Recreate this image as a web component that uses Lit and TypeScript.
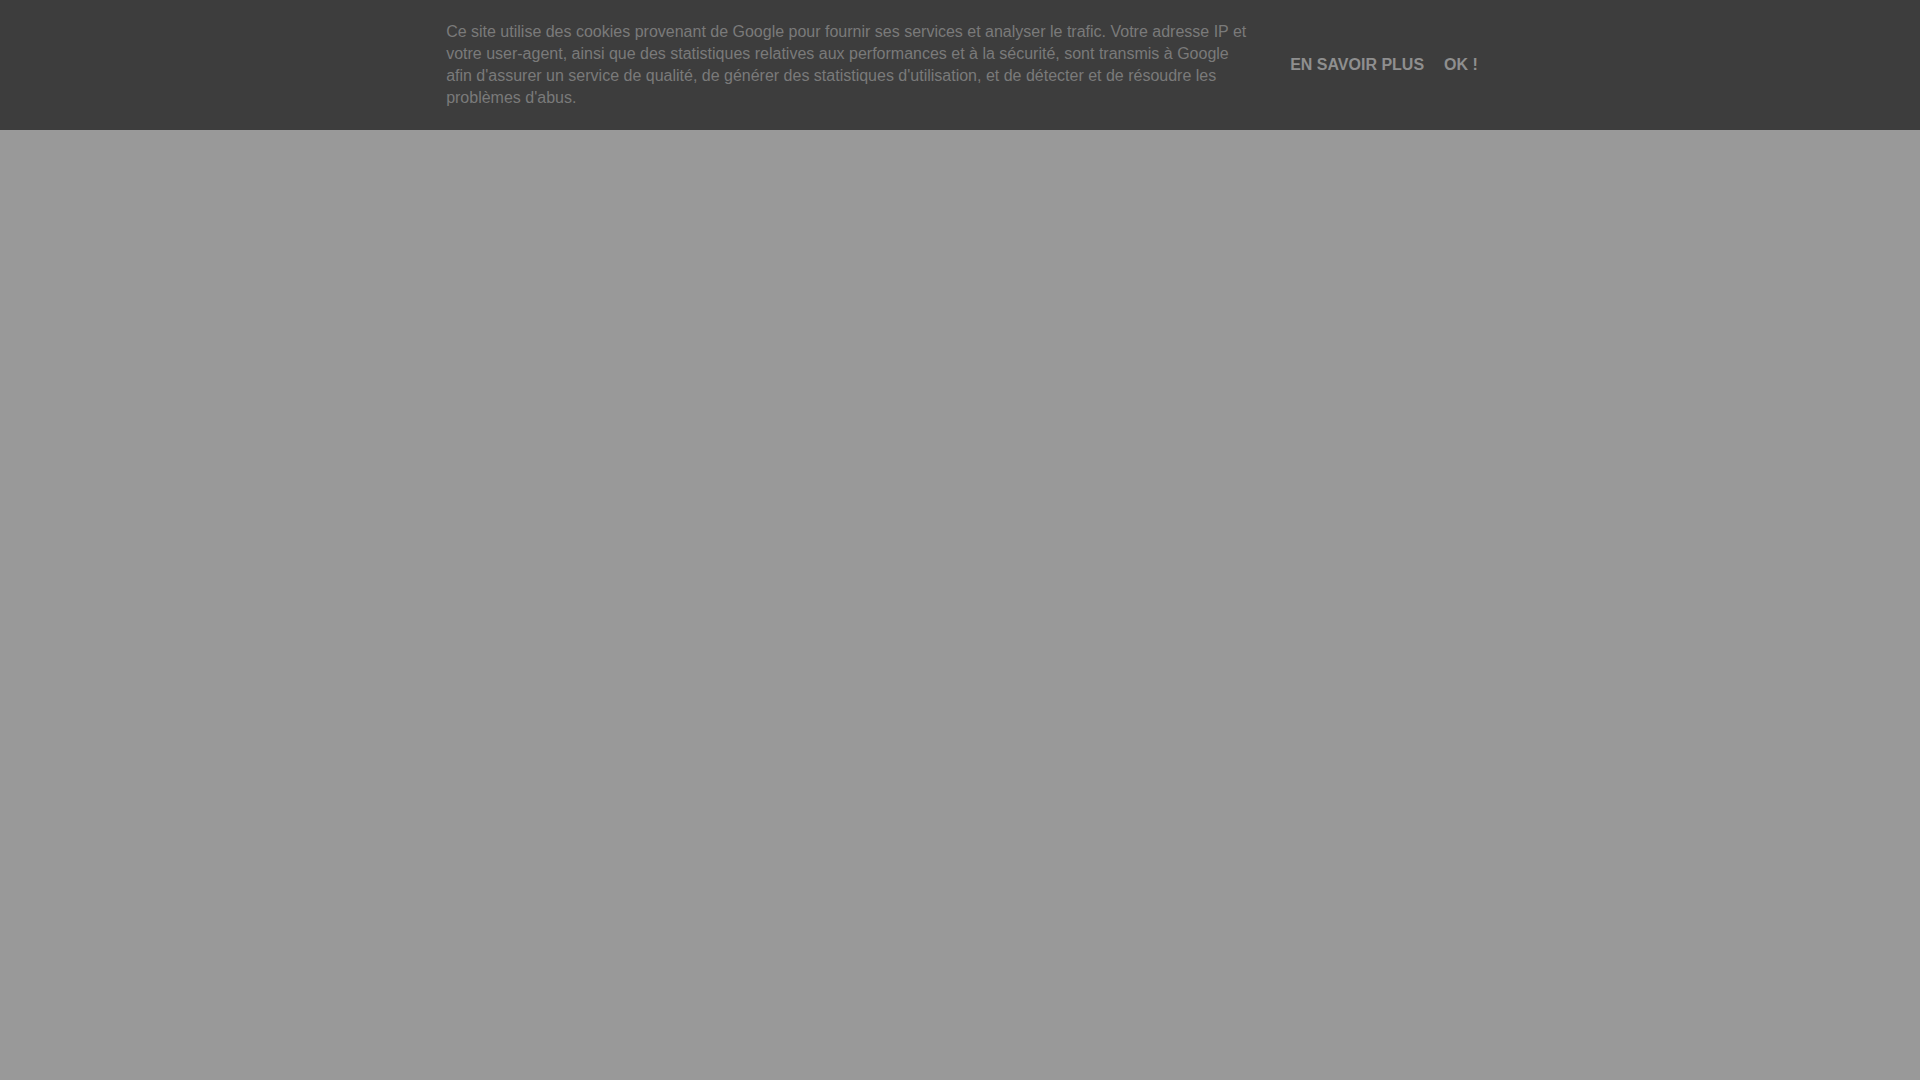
import { LitElement, html, css } from 'lit';
import { customElement } from 'lit/decorators.js';

@customElement('cookie-notice')
export class CookieNotice extends LitElement {
    static styles = css`
        :host {
            display: block;
            background: #3d3d3d;
            font: 16px/22px "Liberation Sans", Arial, sans-serif;
        }
        .inner {
            display: flex;
            align-items: center;
            justify-content: center;
            gap: 40px;
            padding: 21px 16px 21px 20px;
        }
        .text {
            flex: 0 1 804px;
            margin: 0;
            color: #7a7a7a;
        }
        .buttons {
            display: flex;
            gap: 20px;
            white-space: nowrap;
        }
        .button {
            padding: 0;
            border: 0;
            background: none;
            color: #8f8f8f;
            font: inherit;
            font-weight: bold;
            text-decoration: none;
            text-transform: uppercase;
            cursor: pointer;
        }
    `;

    render() {
        return html`
            <div class="inner">
                <p class="text">
                    Ce site utilise des cookies provenant de Google pour fournir ses services et analyser le trafic. Votre adresse IP et votre user-agent, ainsi que des statistiques relatives aux performances et à la sécurité, sont transmis à Google afin d'assurer un service de qualité, de générer des statistiques d'utilisation, et de détecter et de résoudre les problèmes d'abus.
                </p>
                <div class="buttons">
                    <a class="button" href="#cookies">En savoir plus</a>
                    <button class="button" type="button" @click=${this._dismiss}>OK !</button>
                </div>
            </div>
        `;
    }

    _dismiss() {
        this.dispatchEvent(new CustomEvent('dismiss', { bubbles: true, composed: true }));
    }
}

@customElement('app-root')
export class AppRoot extends LitElement {
    static properties = {
        dismissed: { state: true }
    };

    static styles = css`
        :host {
            display: block;
            min-height: 100vh;
            background: #999;
        }
    `;

    declare dismissed: boolean;

    constructor() {
        super();
        this.dismissed = false;
    }

    render() {
        return this.dismissed
            ? html``
            : html`<cookie-notice @dismiss=${() => { this.dismissed = true; }}></cookie-notice>`;
    }
}
